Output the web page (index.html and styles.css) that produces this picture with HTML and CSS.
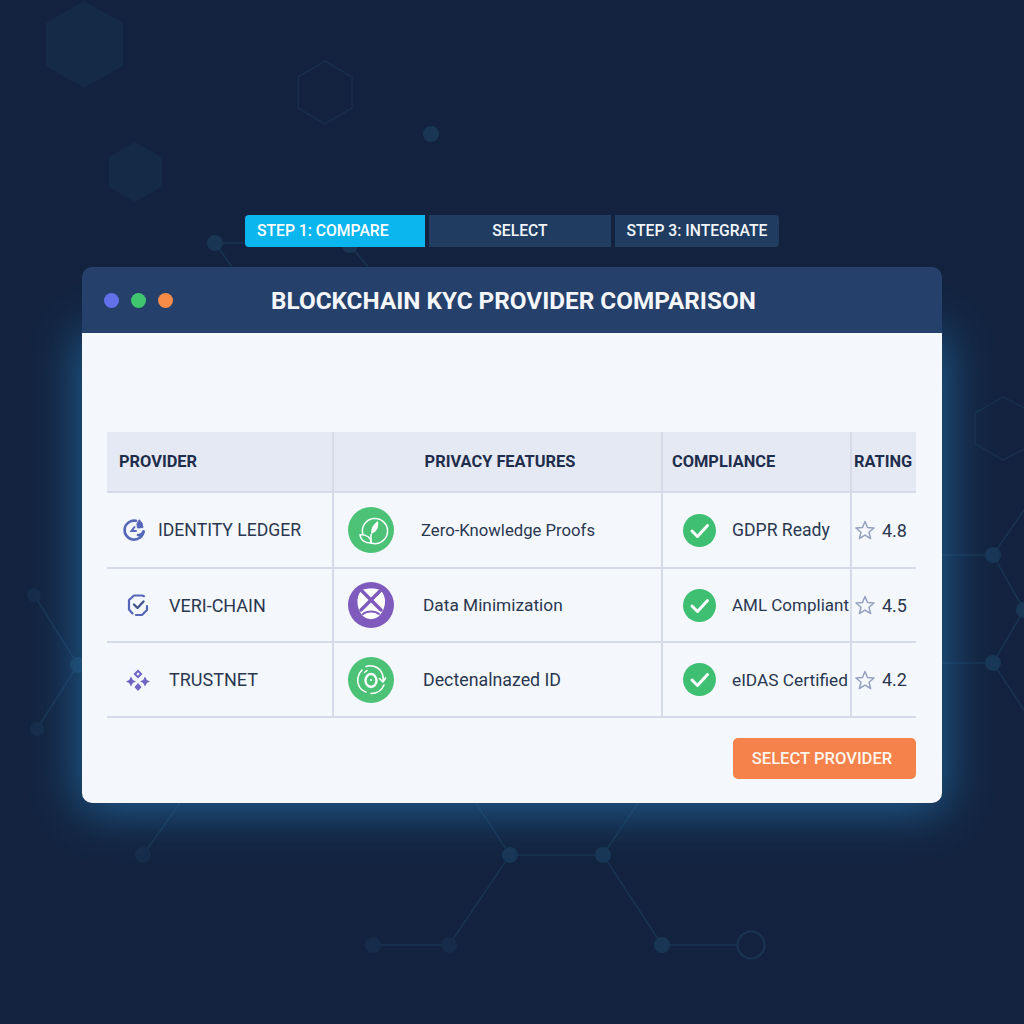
FILE: index.html
```html
<!DOCTYPE html>
<html lang="en">
<head>
  <meta charset="UTF-8">
  <meta name="viewport" content="width=device-width, initial-scale=1.0">
  <title>Blockchain KYC Provider Comparison</title>
  <link rel="stylesheet" href="styles.css">
</head>
<body>
  <!-- backdrop: hexagons and chain nodes -->
  <svg class="backdrop" width="1024" height="1024" viewBox="0 0 1024 1024" aria-hidden="true">
    <g fill="#142a47">
      <polygon points="84,1 123,23 123,66 84,88 46,66 46,23"/>
      <polygon points="135,142 162,157 162,187 135,202 109,187 109,157"/>
    </g>
    <g fill="none" stroke="#182e4c" stroke-width="1.5">
      <polygon points="325,61 352,77 352,108 325,124 298,108 298,77"/>
      <polygon points="1003,397 1034,413 1034,444 1003,460 975,444 975,413"/>
    </g>
    <g fill="none" stroke="#1a3352" stroke-width="1.5">
      <path d="M215 243H245M215 243L232 267M350 245L368 267"/>
      <path d="M34 595L78 665L37 729M78 665H84"/>
      <path d="M942 555H993L1024 510M993 555L1024 610L993 663L1024 710M942 663H993"/>
      <path d="M143 855L180 803M476 803L510 855H603L638 803M510 855L449 945H373M603 855L662 945H737"/>
    </g>
    <g fill="#193655">
      <circle cx="215" cy="243" r="8"/>
      <circle cx="350" cy="245" r="8"/>
      <circle cx="431" cy="134" r="8"/>
      <circle cx="78" cy="665" r="8"/>
      <circle cx="993" cy="555" r="8"/>
      <circle cx="993" cy="663" r="8"/>
      <circle cx="1024" cy="610" r="8"/>
      <circle cx="510" cy="855" r="8"/>
      <circle cx="603" cy="855" r="8"/>
      <circle cx="662" cy="945" r="8"/>
    </g>
    <g fill="#162c4a">
      <circle cx="34" cy="595" r="7"/>
      <circle cx="37" cy="729" r="7"/>
      <circle cx="143" cy="855" r="8"/>
      <circle cx="373" cy="945" r="8"/>
      <circle cx="449" cy="945" r="8"/>
    </g>
    <circle cx="751" cy="945" r="13.5" fill="none" stroke="#1a3452" stroke-width="2"/>
  </svg>

  <div class="page">
    <div class="stepper">
      <div class="step step-active">STEP 1: COMPARE</div>
      <div class="step step-mid">SELECT</div>
      <div class="step step-last">STEP 3: INTEGRATE</div>
    </div>

    <div class="window">
      <div class="window-bar">
        <div class="dots">
          <span class="dot dot-blue"></span>
          <span class="dot dot-green"></span>
          <span class="dot dot-orange"></span>
        </div>
        <h1>BLOCKCHAIN KYC PROVIDER COMPARISON</h1>
      </div>

      <div class="window-body">
        <table class="compare">
          <thead>
            <tr>
              <th class="col-provider">PROVIDER</th>
              <th class="col-privacy">PRIVACY FEATURES</th>
              <th class="col-compliance">COMPLIANCE</th>
              <th class="col-rating">RATING</th>
            </tr>
          </thead>
          <tbody>
            <tr class="row-a">
              <td>
                <div class="cell provider provider-first">
                  <svg class="logo" viewBox="0 0 24 24" fill="none" stroke="#5566b8" stroke-width="2.6" stroke-linecap="round">
                    <path d="M14 2.800A9.500 9.500 0 1 0 21.500 13.500"/>
                    <path d="M21.500 13.500A5 5 0 0 1 16 17"/>
                    <path d="M12.500 9L9.500 13H14" stroke-width="2"/>
                    <path d="M17.500 2L20 5L21 9.500L15.500 10L15 6Z" fill="#5566b8" stroke-width="1"/>
                  </svg>
                  <span>IDENTITY LEDGER</span>
                </div>
              </td>
              <td>
                <div class="cell privacy">
                  <svg class="badge" viewBox="0 0 46 46">
                    <circle cx="23" cy="23" r="23" fill="#4cc276"/>
                    <g fill="none" stroke="#fff" stroke-width="1.5" stroke-linejoin="round">
                      <path d="M15 28A12.600 12.600 0 1 1 23 36"/>
                      <path d="M23 36C23 31 19 27.500 12 27.500C12.500 33 17 36 23 36Z"/>
                      <path d="M23 36V27"/>
                    </g>
                    <path d="M23 27C23 21 25 17.500 30 14C31 20 29 25 23 27Z" fill="#fff"/>
                  </svg>
                  <span class="label-zero">Zero-Knowledge Proofs</span>
                </div>
              </td>
              <td>
                <div class="cell compliance">
                  <svg class="check" viewBox="0 0 33 33">
                    <circle cx="16.500" cy="16.500" r="16.500" fill="#3fbf72"/>
                    <path d="M9 17L14.500 22.500L24.500 11.500" fill="none" stroke="#fff" stroke-width="3" stroke-linecap="round" stroke-linejoin="round"/>
                  </svg>
                  <span>GDPR Ready</span>
                </div>
              </td>
              <td>
                <div class="cell rating">
                  <svg class="star" viewBox="0 0 20 20">
                    <path d="M10 1.500L12.500 7.500L19 8L14 12.200L15.600 18.500L10 15.100L4.400 18.500L6 12.200L1 8L7.500 7.500Z" fill="none" stroke="#95a1bf" stroke-width="1.500" stroke-linejoin="round"/>
                  </svg>
                  <span>4.8</span>
                </div>
              </td>
            </tr>
            <tr class="row-b">
              <td>
                <div class="cell provider provider-wide">
                  <svg class="logo" viewBox="0 0 24 24" fill="none" stroke="#5566b8" stroke-width="2.200" stroke-linecap="round" stroke-linejoin="round">
                    <path d="M18 3.200L16 2.500H8L3 7V16.500L6.500 20.500"/>
                    <path d="M10 22H16L21 17V13"/>
                    <path d="M8 11.500L11.500 15L17.500 8.500" stroke="#46568c" stroke-width="2.400"/>
                  </svg>
                  <span>VERI-CHAIN</span>
                </div>
              </td>
              <td>
                <div class="cell privacy privacy-shift">
                  <svg class="badge" viewBox="0 0 46 46">
                    <circle cx="23" cy="23" r="23" fill="#7e5bbd"/>
                    <path d="M15 7.500C20 6 27 6 31 7.500C34 9 36.500 13 37 18C37.500 25 34 33 28 36C25 37.500 21 37.500 18 36C12 33 9 25 9.500 18C10 13 12 9 15 7.500Z" fill="#fff"/>
                    <g stroke="#7e5bbd" fill="none" stroke-linecap="round">
                      <path d="M12 7L33 28" stroke-width="3.500"/>
                      <path d="M34 7L13 28" stroke-width="3.500"/>
                      <path d="M15 32C19 28.500 27 28.500 31 32" stroke-width="2"/>
                    </g>
                  </svg>
                  <span class="label-data">Data Minimization</span>
                </div>
              </td>
              <td>
                <div class="cell compliance">
                  <svg class="check" viewBox="0 0 33 33">
                    <circle cx="16.500" cy="16.500" r="16.500" fill="#3fbf72"/>
                    <path d="M9 17L14.500 22.500L24.500 11.500" fill="none" stroke="#fff" stroke-width="3" stroke-linecap="round" stroke-linejoin="round"/>
                  </svg>
                  <span class="label-aml">AML Compliant</span>
                </div>
              </td>
              <td>
                <div class="cell rating">
                  <svg class="star" viewBox="0 0 20 20">
                    <path d="M10 1.500L12.500 7.500L19 8L14 12.200L15.600 18.500L10 15.100L4.400 18.500L6 12.200L1 8L7.500 7.500Z" fill="none" stroke="#95a1bf" stroke-width="1.500" stroke-linejoin="round"/>
                  </svg>
                  <span>4.5</span>
                </div>
              </td>
            </tr>
            <tr class="row-c">
              <td>
                <div class="cell provider provider-wide">
                  <svg class="logo" viewBox="0 0 24 24" fill="#6f63c4">
                    <path d="M12 1.500L16.500 6L12 10.500L7.500 6Z M12 4.300L10.300 6L12 7.700L13.700 6Z" fill-rule="evenodd"/>
                    <path d="M5 8.500L6.800 12L10 13.500L6.800 15L5 18.500L3.200 15L0 13.500L3.200 12Z"/>
                    <path d="M19 8.500L20.800 12L24 13.500L20.800 15L19 18.500L17.200 15L14 13.500L17.200 12Z"/>
                    <path d="M12 15L15.500 19L12 23L8.500 19Z"/>
                  </svg>
                  <span>TRUSTNET</span>
                </div>
              </td>
              <td>
                <div class="cell privacy privacy-shift">
                  <svg class="badge" viewBox="0 0 46 46">
                    <circle cx="23" cy="23" r="23" fill="#4cc276"/>
                    <g fill="none" stroke="#fff" stroke-width="1.600" stroke-linecap="round" stroke-linejoin="round">
                      <path d="M14 13C9.500 17.500 8.500 24 11 29C12.500 32 15 34 18 35"/>
                      <path d="M18 9.500C23 7.500 29 9.500 32 13C34.500 16 35.500 20 35 24"/>
                      <path d="M31.500 21.500L35 25L37.500 21"/>
                      <path d="M36 28C34 33 29 36.500 23 36.500"/>
                    </g>
                    <ellipse cx="23" cy="23.500" rx="5.500" ry="6.500" fill="none" stroke="#fff" stroke-width="2.400"/>
                    <path d="M16.500 15.500L19 13.500" stroke="#fff" stroke-width="1.500" stroke-linecap="round"/>
                    <circle cx="23" cy="23" r="1" fill="#fff"/>
                  </svg>
                  <span class="label-dec">Dectenalnazed ID</span>
                </div>
              </td>
              <td>
                <div class="cell compliance">
                  <svg class="check" viewBox="0 0 33 33">
                    <circle cx="16.500" cy="16.500" r="16.500" fill="#3fbf72"/>
                    <path d="M9 17L14.500 22.500L24.500 11.500" fill="none" stroke="#fff" stroke-width="3" stroke-linecap="round" stroke-linejoin="round"/>
                  </svg>
                  <span class="label-data">eIDAS Certified</span>
                </div>
              </td>
              <td>
                <div class="cell rating">
                  <svg class="star" viewBox="0 0 20 20">
                    <path d="M10 1.500L12.500 7.500L19 8L14 12.200L15.600 18.500L10 15.100L4.400 18.500L6 12.200L1 8L7.500 7.500Z" fill="none" stroke="#95a1bf" stroke-width="1.500" stroke-linejoin="round"/>
                  </svg>
                  <span>4.2</span>
                </div>
              </td>
            </tr>
          </tbody>
        </table>
        <div class="actions">
          <button class="select-btn">SELECT PROVIDER</button>
        </div>
      </div>
    </div>
  </div>
</body>
</html>
```

FILE: styles.css
```css
html, body {
  margin: 0;
  padding: 0;
}
body {
  width: 1024px;
  height: 1024px;
  overflow: hidden;
  position: relative;
  background: #13233f;
  font-family: Roboto, "Liberation Sans", sans-serif;
}
.backdrop {
  position: absolute;
  top: 0;
  left: 0;
}
.page {
  position: relative;
  padding: 215px 82px 0;
}

/* stepper */
.stepper {
  display: flex;
  gap: 4px;
  margin-left: 163px;
  margin-bottom: 20px;
}
.step {
  height: 32px;
  line-height: 32px;
  color: #f2f6fb;
  font-size: 15.7px;
  font-weight: 500;
  background: #203c60;
  box-sizing: border-box;
}
.step-active {
  width: 180px;
  padding-left: 12px;
  background: #0bb5ee;
  color: #fff;
  border-radius: 4px 0 0 4px;
}
.step-mid {
  width: 182px;
  text-align: center;
}
.step-last {
  width: 164px;
  text-align: center;
  border-radius: 0 4px 4px 0;
}

/* window */
.window {
  width: 860px;
}
.window-bar {
  position: relative;
  z-index: 1;
  display: flex;
  align-items: center;
  height: 66px;
  padding-left: 22px;
  background: #25406a;
  border-radius: 10px 10px 0 0;
}
.dots {
  display: flex;
  gap: 12px;
}
.dot {
  width: 15px;
  height: 15px;
  border-radius: 50%;
}
.dot-blue {
  background: #6270ea;
}
.dot-green {
  background: #3fc66f;
}
.dot-orange {
  background: #f58c48;
}
h1 {
  margin: 0 0 0 98px;
  font-size: 24.3px;
  font-weight: 700;
  color: #f4f6fa;
}
.window-body {
  padding: 99px 26px 24px 25px;
  background: #f4f7fc;
  border-radius: 0 0 10px 10px;
  box-shadow: 0 4px 48px 4px rgba(36, 110, 165, 0.8);
}

/* table */
.compare {
  width: 809px;
  table-layout: fixed;
  border-collapse: collapse;
  color: #2a3750;
  font-size: 17.6px;
}
.compare th {
  height: 60px;
  padding: 0;
  background: #e5e9f3;
  color: #1f2d4d;
  font-size: 16.4px;
  font-weight: 700;
  text-align: left;
  box-sizing: border-box;
}
.compare th + th,
.compare td + td {
  border-left: 2px solid #d5dbe8;
}
.compare td {
  padding: 0;
  border-bottom: 2px solid #d5dbe8;
}
.compare thead tr {
  border-bottom: 2px solid #d5dbe8;
}
.row-a td {
  height: 74px;
}
.row-b td {
  height: 72px;
}
.row-c td {
  height: 73px;
}
.col-provider {
  width: 226px;
  padding-left: 12px !important;
}
.col-privacy {
  width: 329px;
  text-align: center !important;
  padding-left: 5px !important;
}
.col-compliance {
  width: 189px;
  padding-left: 9px !important;
}
.col-rating {
  width: 65px;
  padding-left: 2px !important;
}
.cell {
  display: flex;
  align-items: center;
  white-space: nowrap;
}
.provider {
  padding-left: 19px;
  gap: 19px;
}
.provider-wide {
  font-size: 18px;
}
.provider-first {
  padding-left: 15px;
  gap: 12px;
}
.logo {
  width: 24px;
  height: 24px;
  flex: none;
}
.privacy {
  padding-left: 14px;
  gap: 27px;
}
.privacy-shift {
  gap: 29px;
}
.label-zero {
  font-size: 16.7px;
}
.label-aml {
  font-size: 17px;
}
.label-data {
  font-size: 17.3px;
}
.label-dec {
  font-size: 17.8px;
}
.badge {
  width: 46px;
  height: 46px;
  flex: none;
}
.compliance {
  padding-left: 20px;
  gap: 16px;
}
.check {
  width: 33px;
  height: 33px;
  flex: none;
}
.rating {
  padding-left: 3px;
  gap: 7px;
  font-size: 18px;
}
.star {
  width: 20px;
  height: 20px;
  flex: none;
}

/* footer button */
.actions {
  display: flex;
  justify-content: flex-end;
  margin-top: 20px;
}
.select-btn {
  width: 183px;
  height: 41px;
  padding: 0 5px 0 0;
  border: none;
  border-radius: 5px;
  background: #f4824a;
  color: #fff5ee;
  font-family: inherit;
  font-size: 16.6px;
  font-weight: 500;
}
```
